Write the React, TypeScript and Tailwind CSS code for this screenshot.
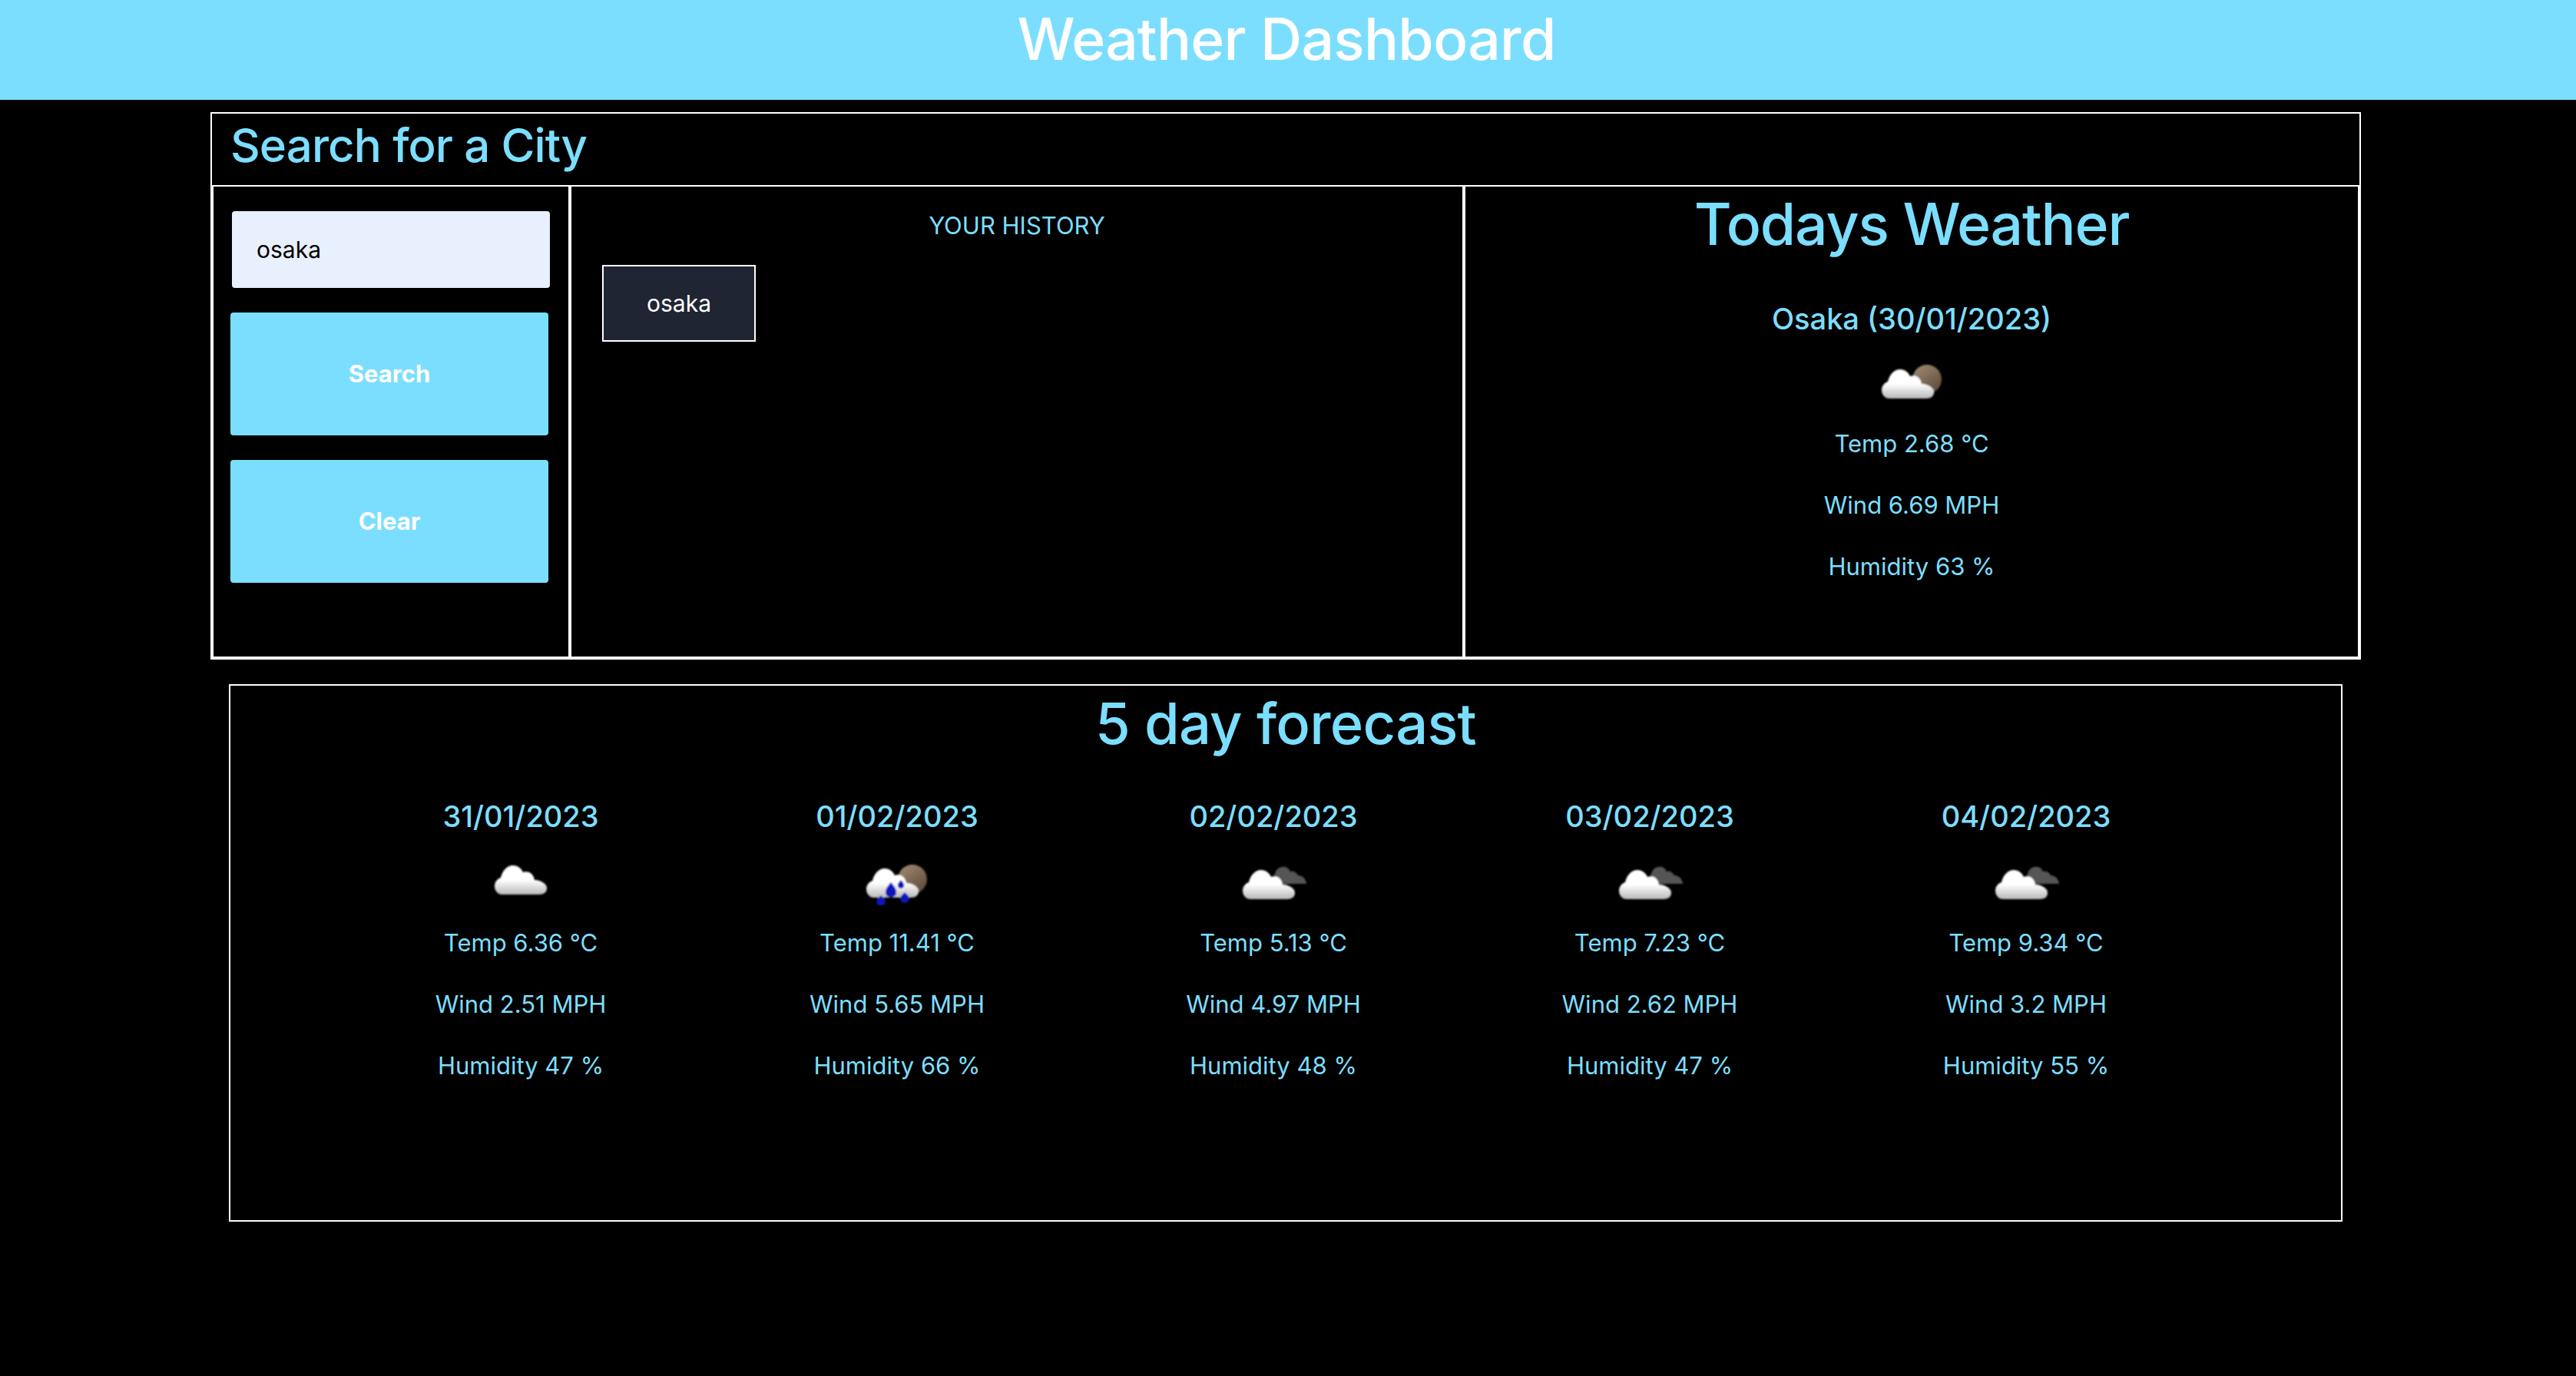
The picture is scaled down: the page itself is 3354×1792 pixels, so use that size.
const FORECAST = [
  { date: "31/01/2023", icon: "cloud", temp: "6.36", wind: "2.51", humidity: "47" },
  { date: "01/02/2023", icon: "rain", temp: "11.41", wind: "5.65", humidity: "66" },
  { date: "02/02/2023", icon: "dark", temp: "5.13", wind: "4.97", humidity: "48" },
  { date: "03/02/2023", icon: "dark", temp: "7.23", wind: "2.62", humidity: "47" },
  { date: "04/02/2023", icon: "dark", temp: "9.34", wind: "3.2", humidity: "55" },
];

const CLOUD = "M10 38C4 38 0 33 0 27 0 22 3 18 8 16 10 7 16 0 24 0 30 0 35 4 37 9 39 8 42 8 45 9 49 11 51 14 52 19 54 19 56 19 58 20 64 22 68 25 68 30 68 35 64 38 58 38Z";

const CLOUD_POS: Record<string, string> = {
  cloud: "translate(8 4)",
  moon: "translate(3 9)",
  rain: "translate(2 8)",
  dark: "translate(2 10)",
};

// openweather style icon: soft white cloud with something behind it
function WeatherIcon({ kind }: { kind: string }) {
  return (
    <svg viewBox="0 0 88 56" className="h-[56px] w-[88px] translate-x-[2px]">
      <defs>
        <linearGradient id="cloudFill" x1="0" y1="0" x2="0" y2="1">
          <stop offset="0.5" stopColor="#ffffff" />
          <stop offset="1" stopColor="#b8b8b8" />
        </linearGradient>
        <linearGradient id="moonFill" x1="0" y1="0" x2="0.7" y2="1">
          <stop offset="0" stopColor="#a28d77" />
          <stop offset="1" stopColor="#5f4c3a" />
        </linearGradient>
        <filter id="soft">
          <feGaussianBlur stdDeviation="0.9" />
        </filter>
      </defs>
      <g filter="url(#soft)">
        {(kind === "moon" || kind === "rain") && <circle cx="62" cy="22" r="19" fill="url(#moonFill)" />}
        {kind === "dark" && (
          <path d="M44 28c-3-11 1-21 9-22 6-1 9 2 11 6 5-1 8 1 10 5 6 0 10 4 11 11z" fill="#555555" />
        )}
        <path d={CLOUD} transform={CLOUD_POS[kind]} fill="url(#cloudFill)" />
        {kind === "rain" && (
          <g fill="#0714b8">
            <path d="M34 26c5 6 7 9 7 13a7 7 0 0 1-14 0c0-4 2-7 7-13z" />
            <path d="M47 22c3 3 5 5 5 8a5 5 0 0 1-10 0c0-3 2-5 5-8z" stroke="#ffffff" strokeWidth="1.5" />
            <path d="M21 43c4 4 6 6 6 8a6 6 0 0 1-12 0c0-2 2-4 6-8z" />
            <path d="M52 39c4 4 6 6 6 8a6 6 0 0 1-12 0c0-2 2-4 6-8z" />
          </g>
        )}
      </g>
    </svg>
  );
}

function Stats({ temp, wind, humidity }: { temp: string; wind: string; humidity: string }) {
  return (
    <div className="flex flex-col gap-[45px] text-[31px] leading-[35px]">
      <p>Temp {temp} °C</p>
      <p>Wind {wind} MPH</p>
      <p>Humidity {humidity} %</p>
    </div>
  );
}

export default function App() {
  return (
    <div className="min-h-[1792px] bg-black font-['Inter',sans-serif] text-[#7cdeff]">
      <header className="flex h-[130px] items-center justify-center bg-[#7cdeff] pb-[29px] pr-[4px]">
        <h1 className="text-[75px] font-medium leading-none tracking-[-0.01em] text-white">Weather Dashboard</h1>
      </header>

      <main className="ml-[274px] mt-[16px] w-[2800px] border-2 border-white">
        <h2 className="flex h-[93px] items-center pl-[24px] pb-[12px] text-[60px] font-medium tracking-[-0.015em]">
          Search for a City
        </h2>
        <div className="flex h-[616px] border-2 border-white">
          <section className="flex w-[462px] shrink-0 flex-col items-start pl-[22px] pt-[32px]">
            <div className="ml-[2px] flex h-[100px] w-[414px] items-center rounded-[4px] bg-[#e8effd] pl-[32px] text-[30px] text-black">
              osaka
            </div>
            <button className="mt-[32px] h-[160px] w-[414px] rounded-[4px] bg-[#7cdeff] text-[31px] font-bold text-white">
              Search
            </button>
            <button className="mt-[32px] h-[160px] w-[414px] rounded-[4px] bg-[#7cdeff] text-[31px] font-bold text-white">
              Clear
            </button>
          </section>
          <section className="w-[1168px] shrink-0 border-x-4 border-white pt-[31px]">
            <p className="text-center text-[31px] leading-[40px]">YOUR HISTORY</p>
            <button className="ml-[40px] mt-[31px] h-[100px] w-[200px] border-[2px] border-white bg-[#1f2533] text-[30px] text-white">
              osaka
            </button>
          </section>
          <section className="flex flex-1 flex-col items-center text-center">
            <h2 className="mt-[4px] text-[75px] font-medium leading-[90px] tracking-[-0.015em]">Todays Weather</h2>
            <h3 className="mt-[56px] text-[38px] font-medium leading-[45px]">Osaka (30/01/2023)</h3>
            <div className="mt-[34px]">
              <WeatherIcon kind="moon" />
            </div>
            <div className="mt-[32px]">
              <Stats temp="2.68" wind="6.69" humidity="63" />
            </div>
          </section>
        </div>
      </main>

      <section className="ml-[298px] mt-[32px] h-[700px] w-[2752px] border-[2px] border-white">
        <h2 className="mt-[4px] text-center text-[74px] font-medium leading-[90px] tracking-[-0.01em]">5 day forecast</h2>
        <div className="mt-[54px] grid grid-cols-[repeat(5,490px)] pl-[133px] text-center">
          {FORECAST.map((d) => (
            <div key={d.date} className="flex flex-col items-center">
              <h3 className="text-[38px] font-medium leading-[45px]">{d.date}</h3>
              <div className="mt-[37px]">
                <WeatherIcon kind={d.icon} />
              </div>
              <div className="mt-[31px]">
                <Stats temp={d.temp} wind={d.wind} humidity={d.humidity} />
              </div>
            </div>
          ))}
        </div>
      </section>
    </div>
  );
}
